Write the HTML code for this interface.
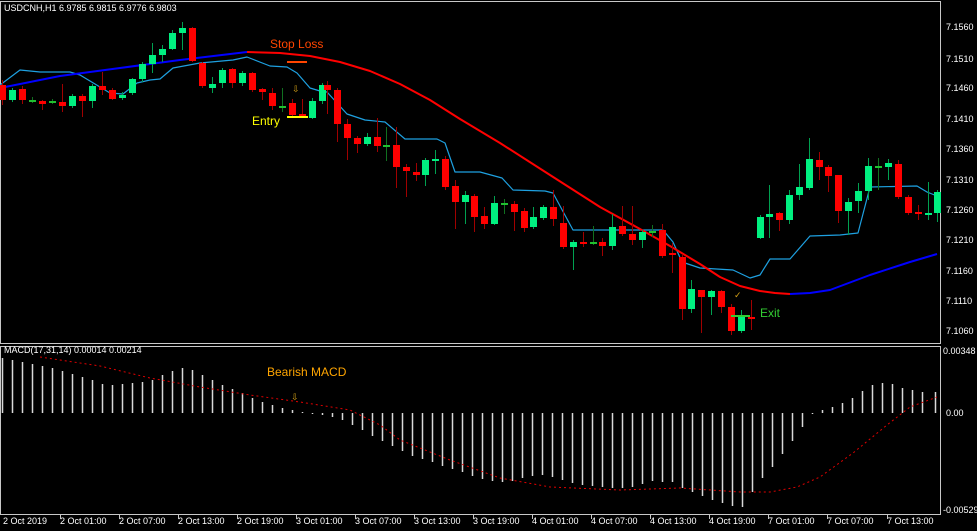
<!DOCTYPE html>
<html><head><meta charset="utf-8"><style>
html,body{margin:0;padding:0;background:#000;width:977px;height:531px;overflow:hidden}
svg{display:block}
text{font-family:"Liberation Sans",sans-serif}
</style></head><body>
<svg id="s" width="977" height="531" xmlns="http://www.w3.org/2000/svg">
<rect width="977" height="531" fill="#000"/>
<g id="grid" stroke="#c8c8c8" fill="none" stroke-width="1">
<rect x="0.5" y="1.5" width="940" height="342"/>
<rect x="0.5" y="346.5" width="940" height="168"/>
</g>
<g id="macd"></g>
<g id="lines" fill="none"></g>
<g id="candles"></g>
<g font-size="9" fill="#fff">
<text x="4" y="11">USDCNH,H1  6.9785 6.9815 6.9776 6.9803</text>
<text x="4" y="353">MACD(17,31,14) 0.00014 0.00214</text>
</g>
<g font-size="9" fill="#fff" id="axis">
<text x="946" y="30">7.1560</text><text x="946" y="62">7.1510</text><text x="946" y="91">7.1460</text>
<text x="946" y="122">7.1410</text><text x="946" y="152">7.1360</text><text x="946" y="183">7.1310</text>
<text x="946" y="213">7.1260</text><text x="946" y="243">7.1210</text><text x="946" y="274">7.1160</text>
<text x="946" y="304">7.1110</text><text x="946" y="334">7.1060</text>
<text x="943" y="354">0.00348</text><text x="946" y="416">0.00</text><text x="943" y="513">-0.00529</text>
</g>
<g font-size="9" fill="#fff">
<text x="3" y="524">2 Oct 2019</text><text x="60" y="524">2 Oct 01:00</text><text x="119" y="524">2 Oct 07:00</text>
<text x="178" y="524">2 Oct 13:00</text><text x="237" y="524">2 Oct 19:00</text><text x="296" y="524">3 Oct 01:00</text>
<text x="355" y="524">3 Oct 07:00</text><text x="414" y="524">3 Oct 13:00</text><text x="473" y="524">3 Oct 19:00</text>
<text x="532" y="524">4 Oct 01:00</text><text x="591" y="524">4 Oct 07:00</text><text x="650" y="524">4 Oct 13:00</text>
<text x="709" y="524">4 Oct 19:00</text><text x="768" y="524">7 Oct 01:00</text><text x="827" y="524">7 Oct 07:00</text>
<text x="887" y="524">7 Oct 13:00</text>
</g>
<g stroke="#c8c8c8" id="ticks"></g>
<text x="270" y="48" font-size="12" fill="#ff4500">Stop Loss</text>
<line x1="287" y1="62" x2="307" y2="62" stroke="#ff4500" stroke-width="2"/>
<text x="252" y="125" font-size="12" fill="#ffff00">Entry</text>
<line x1="287" y1="117" x2="308" y2="117" stroke="#ffff00" stroke-width="2"/>
<text x="292" y="92" font-size="9" fill="#d4a017">⇩</text>
<text x="760" y="317" font-size="12" fill="#32cd32">Exit</text>
<line x1="731" y1="316" x2="750" y2="316" stroke="#32cd32" stroke-width="2"/>
<text x="734" y="298" font-size="9" fill="#d4a017">✓</text>
<text x="267" y="376" font-size="12" fill="#ffa500">Bearish MACD</text>
<text x="291" y="400" font-size="9" fill="#d4a017">⇩</text>
</svg>
<script>
var NS="http://www.w3.org/2000/svg";
function el(p,t,a){var e=document.createElementNS(NS,t);for(var k in a)e.setAttribute(k,a[k]);p.appendChild(e);return e;}
var C=[[2,85,100,80,105],[12,100,90,88,102],[22,89,100,86,104],[32,100,100,97,103],[42,101,104,100,110],[52,101,101,99,104],[62,102,106,84,112],[72,106,96,94,108],[82,96,101,94,117],[92,101,86,84,108],[102,86,90,72,95],[112,90,99,88,100],[122,98,95,92,100],[132,93,79,78,95],[142,79,64,62,82],[152,64,55,43,73],[162,55,49,45,62],[172,49,33,30,50],[182,33,28,22,50],[192,28,61,27,62],[202,63,86,62,88],[212,88,84,77,93],[222,83,70,68,88],[232,69,83,68,88],[242,83,73,71,86],[252,73,90,72,92],[262,89,92,88,100],[272,93,106,88,110],[282,106,106,88,112],[292,103,115,99,116],[302,114,117,99,118],[312,118,101,98,119],[322,101,85,83,104],
[327,85,90,81,114],[337,90,124,88,142],[347,124,138,119,160],[357,138,144,136,153],[367,144,137,133,146],[377,137,146,118,152],[386,145,145,127,161],[396,145,167,127,188],[406,167,171,164,197],[416,172,175,163,181],[425,175,160,158,186],[435,161,159,150,174],[445,159,187,156,190],[455,186,202,180,229],[465,202,195,191,224],[474,196,217,194,232],[484,216,224,207,229],[494,224,203,196,225],[504,203,203,199,214],[514,204,212,201,231],[524,211,228,208,232],[533,227,217,207,229],[543,218,207,205,220],[553,207,219,190,226],[563,223,247,206,249],[573,247,242,240,270],[583,242,243,232,247],[593,242,242,226,245],[602,242,246,238,256],[612,246,227,214,250],[622,226,234,206,236],[632,234,240,206,245],[642,240,232,230,248],[652,231,231,225,237],[662,230,256,224,258],[672,253,255,243,273],
[682,257,309,255,320],[691,309,289,280,313],[701,290,297,290,333],[711,297,291,290,315],[721,291,307,290,313],[731,307,331,304,335],[741,331,315,310,333],[751,317,319,300,330],[760,238,217,215,239],[769,217,214,185,238],[779,213,220,212,231],[789,220,195,190,224],[799,195,187,164,200],[809,188,159,138,190],[819,160,167,152,180],[828,167,176,165,192],[838,175,211,175,223],[848,211,202,198,235],[858,201,191,183,213],[868,191,166,158,200],[878,166,166,158,190],[888,167,163,159,180],[898,164,197,160,199],[908,197,213,195,215],[918,212,214,205,220],[928,214,213,182,220],[937,213,192,190,222]];
var cg=document.getElementById('candles');
C.forEach(function(c){var x=c[0],o=c[1],cl=c[2],h=c[3],l=c[4];var col=cl<o?'#00f080':(cl>o?'#ff0000':'#20c030');
var wc=cl<o?'#00a050':(cl>o?'#a00000':'#107020');
el(cg,'line',{x1:x+0.5,x2:x+0.5,y1:h,y2:l,stroke:wc,'stroke-width':1});
var t=Math.min(o,cl),b=Math.max(o,cl);if(b-t<2){el(cg,'rect',{x:x-3,y:t,width:7,height:2,fill:col});}else el(cg,'rect',{x:x-3,y:t,width:7,height:b-t,fill:col});});
var lg=document.getElementById('lines');
function pl(pts,col,w,dash){var a={points:pts.map(function(p){return p.join(',')}).join(' '),stroke:col,'stroke-width':w,fill:'none','stroke-linejoin':'round'};if(dash)a['stroke-dasharray']=dash;el(lg,'polyline',a);}
pl([[0,85],[20,70],[40,72],[70,72],[80,75],[110,93],[123,94],[137,83],[150,80],[160,79],[173,68],[200,63],[233,60],[247,57],[270,66],[287,67],[297,73],[310,88],[320,91],[327,92],[347,114],[365,120],[385,122],[405,139],[437,139],[445,143],[455,172],[480,172],[502,178],[513,190],[545,191],[553,193],[573,230],[663,230],[673,242],[682,262],[700,268],[733,270],[750,278],[760,275],[770,259],[790,259],[810,236],[840,235],[858,233],[870,187],[917,186],[927,192],[937,196]],'#1ea0e0',1.2);
pl([[0,88],[60,76],[120,68],[180,60],[247,52]],'#0000ff',2);
pl([[247,52],[280,53],[310,56],[340,62],[370,71],[400,84],[430,100],[460,119],[500,143],[550,175],[600,207],[640,229],[670,246],[700,264],[720,277],[740,286],[760,291],[775,293],[790,294]],'#ff0000',2);
pl([[790,294],[810,293],[830,290],[870,275],[910,262],[937,254]],'#0000ff',2);
var M=[[2,358],[12,360],[22,362],[32,364],[42,366],[52,368],[62,371],[72,374],[82,377],[92,380],[102,384],[112,385],[122,384],[132,383],[142,382],[152,380],[162,375],[172,371],[182,368],[192,370],[202,375],[212,380],[222,385],[232,389],[242,393],[252,398],[262,402],[272,405],[282,408],[292,410],[302,412],[312,414],[322,415],[332,417],[342,420],[352,425],[362,430],[372,436],[382,441],[392,446],[402,451],[412,456],[422,459],[432,462],[442,466],[452,469],[462,472],[472,476],[482,479],[492,481],[502,482],[512,481],[522,478],[532,476],[542,475],[552,477],[562,480],[572,483],[582,485],[592,486],[602,487],[612,488],[622,488],[632,487],[642,484],[652,481],[662,482],[672,482],[682,488],[692,492],[702,496],[712,500],[722,503],[732,506],[742,507],[752,492],[762,478],[772,467],[782,454],[792,441],[802,427],[812,414],[822,410],[832,407],[842,403],[852,398],[862,391],[872,385],[882,383],[892,384],[902,388],[912,390],[922,392],[935,392]];
var mg=document.getElementById('macd');
M.forEach(function(m){el(mg,'line',{x1:m[0]+0.5,x2:m[0]+0.5,y1:413,y2:m[1],stroke:'#d8d8d8','stroke-width':1.5});});
pl([[40,357],[100,366],[150,378],[200,387],[250,395],[300,402],[350,410],[380,425],[400,440],[450,460],[500,478],[550,487],[620,490],[680,488],[740,492],[770,492],[797,487],[820,477],[853,453],[887,425],[910,407],[937,397]],'#e00000',1,'2,3');
var tg=document.getElementById('ticks');
[60,119,178,237,296,355,414,473,532,591,650,709,768,827,887].forEach(function(x){el(tg,'line',{x1:x+0.5,x2:x+0.5,y1:515,y2:519});});
</script>
</body></html>
